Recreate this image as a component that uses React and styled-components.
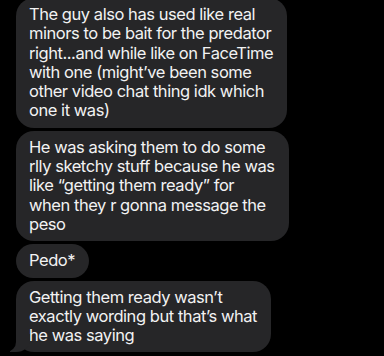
import React from "react"
import styled, { createGlobalStyle } from "styled-components"

const GlobalStyle = createGlobalStyle`
  html, body {
    margin: 0;
    padding: 0;
    background: #000;
  }
  body {
    font-family: "Inter", "Roboto", sans-serif;
    overflow: hidden;
  }
`

const Screen = styled.div`
  width: 384px;
  height: 356px;
  background: #000;
  overflow: hidden;
`

const Thread = styled.div`
  display: flex;
  flex-direction: column;
  align-items: flex-start;
  gap: 3px;
  padding: 0 16px;
  margin-top: -2px;
`

const Bubble = styled.div`
  position: relative;
  background: #262628;
  color: #f2f2f3;
  font-size: 16.5px;
  line-height: 19.3px;
  letter-spacing: -0.45px;
  padding: 7px 14px 7px 13px;
  border-radius: 18px;
  white-space: pre-line;

  ${(p) =>
    p.$tail &&
    `
    &::before {
      content: "";
      position: absolute;
      left: -6px;
      bottom: 0;
      width: 20px;
      height: 18px;
      background: #262628;
      border-bottom-right-radius: 14px 12px;
    }
    &::after {
      content: "";
      position: absolute;
      left: -10px;
      bottom: 0;
      width: 10px;
      height: 20px;
      background: #000;
      border-bottom-right-radius: 10px;
    }
  `}
`

const messages = [
  "The guy also has used like real\nminors to be bait for the predator\nright...and while like on FaceTime\nwith one (might\u2019ve been some\nother video chat thing idk which\none it was)",
  "He was asking them to do some\nrlly sketchy stuff because he was\nlike \u201cgetting them ready\u201d for\nwhen they r gonna message the\npeso",
  "Pedo*",
  "Getting them ready wasn\u2019t\nexactly wording but that\u2019s what\nhe was saying",
]

export default function App() {
  return (
    <Screen>
      <GlobalStyle />
      <Thread>
        {messages.map((m, i) => (
          <Bubble key={i} $tail={i === messages.length - 1}>
            {m}
          </Bubble>
        ))}
      </Thread>
    </Screen>
  )
}
